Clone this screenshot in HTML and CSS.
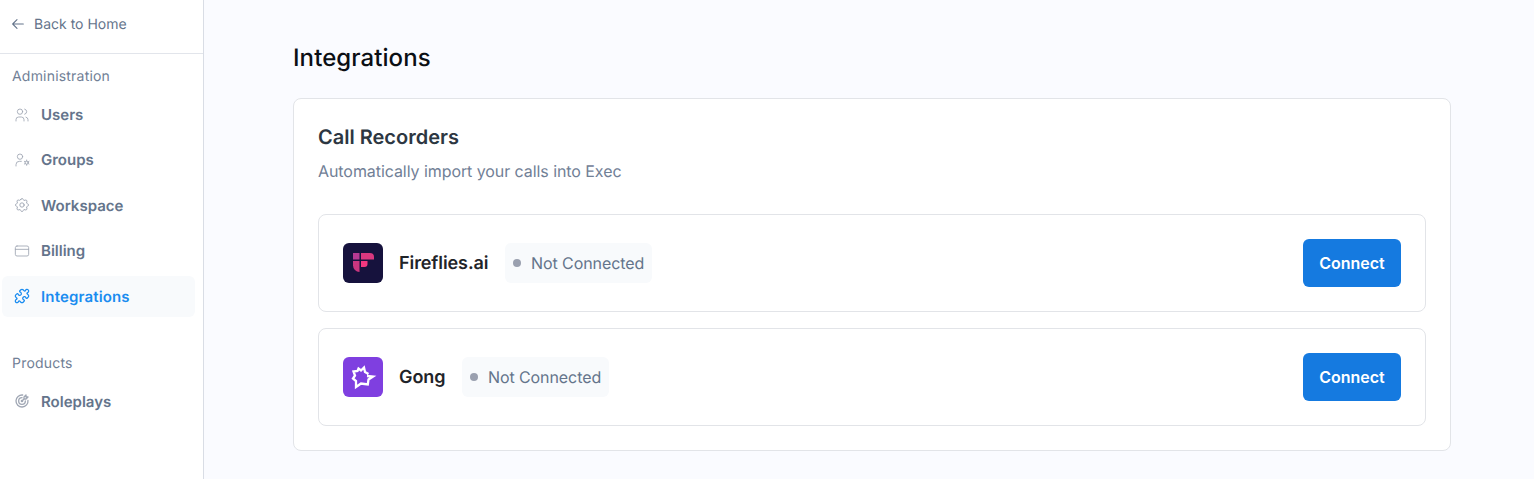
FILE: index.html
```html
<!DOCTYPE html>
<html lang="en">
  <head>
    <meta charset="UTF-8" />
    <title>Integrations</title>
    <link rel="stylesheet" href="styles.css">
  </head>
  <body>
    <div class="layout">
      <aside class="sidebar">
        <a class="back-link">
          <svg class="back-icon" viewBox="0 0 24 24"><path d="M20 12H4M10.500 5.500L4 12l6.500 6.500" /></svg>
          Back to Home
        </a>
        <div class="nav-title">Administration</div>
        <a class="nav-item">
          <svg class="nav-icon" viewBox="0 0 24 24"><circle cx="9" cy="7" r="4" /><path d="M3 21v-2a4 4 0 0 1 4-4h4a4 4 0 0 1 4 4v2M16 3.130a4 4 0 0 1 0 7.750M21 21v-2a4 4 0 0 0-3-3.850" /></svg>
          Users
        </a>
        <a class="nav-item">
          <svg class="nav-icon" viewBox="0 0 24 24"><circle cx="9" cy="7" r="4" /><path d="M3 21v-2a5 5 0 0 1 5-5h3" /><circle cx="19" cy="16" r="2.400" /><path d="M19 12v1.600M19 18.400V20M15.500 14l1.400.8M21.100 17.200l1.400.8M15.500 18l1.400-.8M21.100 14.800l1.400-.8" /></svg>
          Groups
        </a>
        <a class="nav-item">
          <svg class="nav-icon" viewBox="1 1 22 22"><path d="M10.325 4.317c.426-1.756 2.924-1.756 3.350 0a1.724 1.724 0 0 0 2.573 1.066c1.543-.94 3.310.826 2.370 2.370a1.724 1.724 0 0 0 1.065 2.572c1.756.426 1.756 2.924 0 3.350a1.724 1.724 0 0 0-1.066 2.573c.94 1.543-.826 3.310-2.370 2.370a1.724 1.724 0 0 0-2.572 1.065c-.426 1.756-2.924 1.756-3.350 0a1.724 1.724 0 0 0-2.573-1.066c-1.543.94-3.310-.826-2.370-2.370a1.724 1.724 0 0 0-1.065-2.572c-1.756-.426-1.756-2.924 0-3.350a1.724 1.724 0 0 0 1.066-2.573c-.94-1.543.826-3.310 2.370-2.370c1 .608 2.296.07 2.572-1.065z" /><circle cx="12" cy="12" r="3" /></svg>
          Workspace
        </a>
        <a class="nav-item">
          <svg class="nav-icon" viewBox="0 0 24 24"><rect x="2" y="4.500" width="20" height="15" rx="2.500" /><path d="M2 9.500h20" /></svg>
          Billing
        </a>
        <a class="nav-item active">
          <svg class="nav-icon" viewBox="0 0 24 24"><path d="M19.439 7.850c-.049.322.059.648.289.878l1.568 1.568c.47.47.706 1.087.706 1.704s-.235 1.233-.706 1.704l-1.611 1.611a.98.98 0 0 1-.837.276c-.47-.07-.802-.48-.968-.925a2.501 2.501 0 1 0-3.214 3.214c.446.166.855.497.925.968a.979.979 0 0 1-.276.837l-1.610 1.610a2.404 2.404 0 0 1-1.705.707 2.402 2.402 0 0 1-1.704-.706l-1.568-1.568a1.026 1.026 0 0 0-.877-.29c-.493.074-.84.504-1.020.968a2.500 2.500 0 1 1-3.237-3.237c.464-.18.894-.527.967-1.020a1.026 1.026 0 0 0-.289-.877l-1.568-1.568A2.402 2.402 0 0 1 1.998 12c0-.617.236-1.234.706-1.704L4.230 8.770c.24-.24.581-.353.917-.303.515.077.877.528 1.073 1.010a2.500 2.500 0 1 0 3.259-3.259c-.482-.196-.933-.558-1.010-1.073-.05-.336.062-.676.303-.917l1.525-1.525A2.402 2.402 0 0 1 12 2c.617 0 1.234.236 1.704.706l1.568 1.568c.23.23.556.338.877.29.493-.074.84-.504 1.020-.968a2.500 2.500 0 1 1 3.237 3.237c-.464.18-.894.527-.967 1.020Z" /></svg>
          Integrations
        </a>
        <div class="nav-title products">Products</div>
        <a class="nav-item">
          <svg class="nav-icon bold" viewBox="0 0 24 24"><circle cx="12" cy="12" r="1" /><path d="M12 7a5 5 0 1 0 5 5M13 3.055A9 9 0 1 0 20.941 11M15 6v3h3l3-3h-3V3zM15 9l-3 3" /></svg>
          Roleplays
        </a>
      </aside>

      <main class="content">
        <h1>Integrations</h1>
        <section class="card">
          <h2>Call Recorders</h2>
          <p class="subtitle">Automatically import your calls into Exec</p>

          <div class="integration">
            <svg class="logo" viewBox="0 0 40 40">
              <rect width="40" height="40" rx="6" fill="#16123d" />
              <path d="M10 10h6.500v6.500H10z" fill="#b63a93" />
              <path d="M18 10h9a4 4 0 0 1 4 4v2.500H18z" fill="#d9387f" />
              <path d="M10 18h6.500v11A6.500 6.500 0 0 1 10 22.500z" fill="#c9367f" />
              <path d="M18 18h6.500v3a3 3 0 0 1-3 3H18z" fill="#f0387f" />
            </svg>
            <span class="integration-name">Fireflies.ai</span>
            <span class="status"><i class="dot"></i>Not Connected</span>
            <button class="connect">Connect</button>
          </div>

          <div class="integration">
            <svg class="logo" viewBox="0 0 40 40">
              <rect width="40" height="40" rx="6" fill="#7f3fe0" />
              <path d="M25.500 17L22 15l-1-4.500-3 3-2.500-2-1 2.500-4 .5 1.500 4-2 3 3 2.500v6l5-3.500 3.500.5 3.300.5.700-5 4.500-3-6-.5" fill="none" stroke="#fff" stroke-width="2.300" />
            </svg>
            <span class="integration-name">Gong</span>
            <span class="status"><i class="dot"></i>Not Connected</span>
            <button class="connect">Connect</button>
          </div>
        </section>
      </main>
    </div>
  </body>
</html>
```

FILE: styles.css
```css
* {
  box-sizing: border-box;
}

body {
  margin: 0;
  font-family: Inter, "Liberation Sans", sans-serif;
  text-rendering: geometricPrecision;
  background-color: #fafbff;
}

.layout {
  display: flex;
  height: 479px;
  overflow: hidden;
}

/* sidebar */
.sidebar {
  width: 204px;
  flex-shrink: 0;
  background-color: #fff;
  border-right: 1px solid #d9dde5;
}

.back-link {
  display: flex;
  align-items: center;
  gap: 8px;
  height: 54px;
  padding: 0 0 5px 10px;
  border-bottom: 1px solid #e2e5eb;
  font-size: 14px;
  color: #64748b;
}

.back-icon {
  width: 16px;
  height: 16px;
  fill: none;
  stroke: #64748b;
  stroke-width: 1.600;
  stroke-linecap: round;
  stroke-linejoin: round;
}

.nav-title {
  padding: 14px 12px 0;
  height: 40px;
  font-size: 14px;
  line-height: 17px;
  letter-spacing: 0.2px;
  color: #718096;
}

.nav-title.products {
  margin-top: 24px;
}

.nav-item {
  display: flex;
  align-items: center;
  gap: 11px;
  width: 193px;
  height: 41px;
  margin: 0 0 4.400px 2px;
  padding-left: 12px;
  border-radius: 6px;
  font-size: 15px;
  font-weight: 600;
  color: #64748b;
}

.nav-item.active {
  background-color: #f8fafc;
  color: #1a8cf0;
  letter-spacing: 0.15px;
}

.nav-icon {
  width: 16px;
  height: 16px;
  flex-shrink: 0;
  fill: none;
  stroke: #a0a7b4;
  stroke-width: 1.300;
  stroke-linecap: round;
  stroke-linejoin: round;
}

.nav-icon.bold {
  stroke-width: 2;
}

.nav-item.active .nav-icon {
  stroke: #1a8cf0;
  stroke-width: 1.900;
}

/* main */
.content {
  flex: 1;
  padding: 41px 83px 0 89px;
}

h1 {
  margin: 0 0 23px;
  font-size: 24px;
  line-height: 34px;
  font-weight: 500;
  letter-spacing: 0.08px;
  color: #0b0f14;
}

.card {
  height: 353px;
  padding: 24px;
  background-color: #fff;
  border: 1px solid #e2e4e8;
  border-radius: 8px;
}

h2 {
  margin: 0 0 8px;
  font-size: 20px;
  line-height: 28px;
  font-weight: 600;
  color: #2d3742;
}

.subtitle {
  margin: 0 0 31px;
  font-size: 16px;
  line-height: 24px;
  letter-spacing: -0.07px;
  color: #718096;
}

.integration {
  display: flex;
  align-items: center;
  height: 98px;
  margin-bottom: 16px;
  padding: 0 24px;
  border: 1px solid #e2e4e8;
  border-radius: 8px;
}

.logo {
  width: 40px;
  height: 40px;
  margin-right: 16px;
}

.integration-name {
  margin-right: 16.500px;
  font-size: 18px;
  font-weight: 600;
  letter-spacing: -0.08px;
  color: #1f2429;
}

.status {
  display: flex;
  align-items: center;
  gap: 10px;
  height: 40px;
  padding: 0 8px;
  border-radius: 6px;
  background-color: #f8fafc;
  font-size: 16px;
  letter-spacing: -0.08px;
  color: #64748b;
}

.dot {
  width: 8px;
  height: 8px;
  border-radius: 50%;
  background-color: #9aa0af;
}

.connect {
  margin-left: auto;
  width: 98px;
  height: 48px;
  border: none;
  border-radius: 6px;
  background-color: #157ae0;
  color: #fff;
  font-family: inherit;
  font-size: 16px;
  font-weight: 600;
  cursor: pointer;
}
```
